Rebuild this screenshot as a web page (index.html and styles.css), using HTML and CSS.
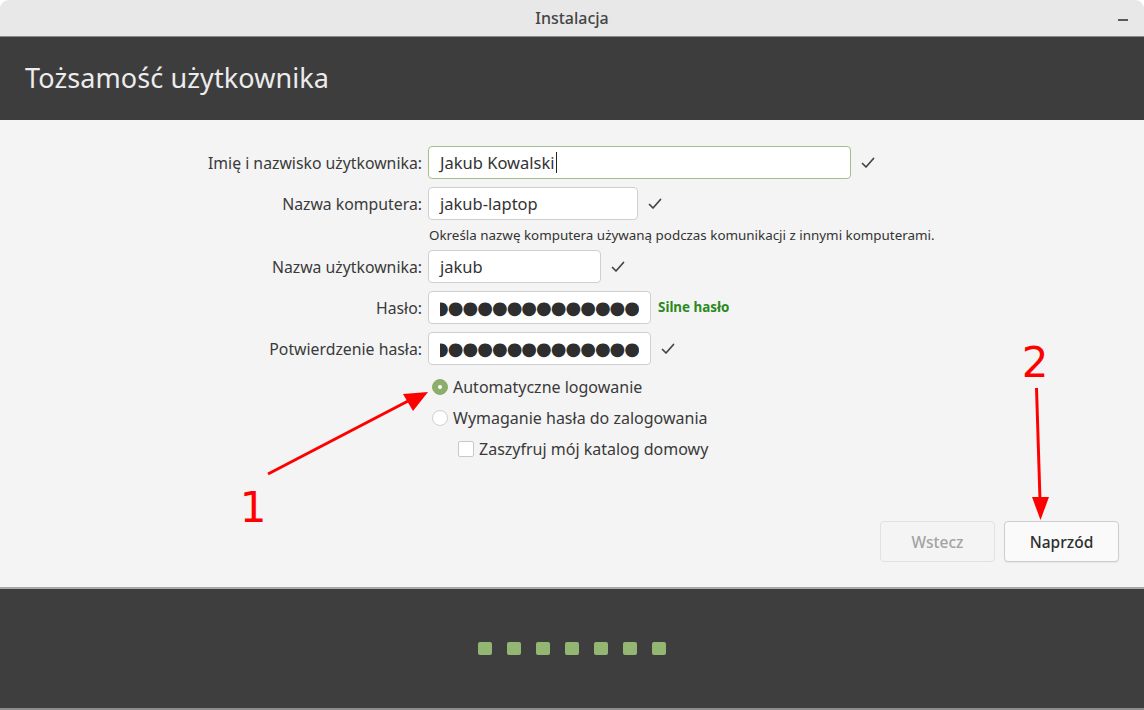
FILE: index.html
```html
<!DOCTYPE html>
<html lang="pl">
<head>
<meta charset="utf-8">
<title>Instalacja</title>
<link rel="stylesheet" href="styles.css">
</head>
<body>
<div class="window">
  <div class="titlebar">
    <span class="title">Instalacja</span>
    <span class="minimize"></span>
  </div>
  <div class="header">
    <h1>Tożsamość użytkownika</h1>
  </div>
  <div class="content">
    <div class="form">
      <label class="label">Imię i nazwisko użytkownika:</label>
      <div class="field">
        <div class="input input-focus w-name">Jakub Kowalski<span class="caret"></span></div>
        <svg class="check" viewBox="0 0 14 12"><path d="M1.5 6.5 L5 10 L12.5 1.5" /></svg>
      </div>

      <label class="label">Nazwa komputera:</label>
      <div class="field">
        <div class="input w-host">jakub-laptop</div>
        <svg class="check" viewBox="0 0 14 12"><path d="M1.5 6.5 L5 10 L12.5 1.5" /></svg>
      </div>

      <span></span>
      <div class="hint">Określa nazwę komputera używaną podczas komunikacji z innymi komputerami.</div>

      <label class="label">Nazwa użytkownika:</label>
      <div class="field">
        <div class="input w-user">jakub</div>
        <svg class="check" viewBox="0 0 14 12"><path d="M1.5 6.5 L5 10 L12.5 1.5" /></svg>
      </div>

      <label class="label">Hasło:</label>
      <div class="field">
        <div class="input w-pass password"><div class="dots-clip"><span>●●●●●●●●●●●●●●●</span></div></div>
        <span class="strength">Silne hasło</span>
      </div>

      <label class="label">Potwierdzenie hasła:</label>
      <div class="field">
        <div class="input w-pass password"><div class="dots-clip"><span>●●●●●●●●●●●●●●●</span></div></div>
        <svg class="check" viewBox="0 0 14 12"><path d="M1.5 6.5 L5 10 L12.5 1.5" /></svg>
      </div>
    </div>

    <div class="options">
      <div class="option"><span class="radio radio-on"></span><span>Automatyczne logowanie</span></div>
      <div class="option"><span class="radio"></span><span>Wymaganie hasła do zalogowania</span></div>
      <div class="option sub"><span class="checkbox"></span><span>Zaszyfruj mój katalog domowy</span></div>
    </div>

    <div class="buttons">
      <button class="btn btn-disabled">Wstecz</button>
      <button class="btn btn-primary">Naprzód</button>
    </div>
  </div>
  <div class="footer">
    <div class="dots">
      <span class="dot"></span><span class="dot"></span><span class="dot"></span><span class="dot"></span><span class="dot"></span><span class="dot"></span><span class="dot"></span>
    </div>
  </div>

  <svg class="annotations" viewBox="0 0 1144 710" width="1144" height="710">
    <line x1="268" y1="474" x2="410" y2="400" class="arrow-line"/>
    <polygon points="428,392 403,394 413,411" class="arrow-head"/>
    <text x="253" y="522" class="num">1</text>
    <line x1="1036.5" y1="388" x2="1040" y2="500" class="arrow-line"/>
    <polygon points="1040.5,520 1032,497 1049,497" class="arrow-head"/>
    <text x="1035" y="377" class="num">2</text>
  </svg>
</div>
</body>
</html>
```

FILE: styles.css
```css
* { box-sizing: border-box; }

html, body {
  margin: 0;
  padding: 0;
  background: #ffffff;
}

body {
  width: 1144px;
  height: 710px;
  overflow: hidden;
  font-family: "Noto Sans", "Open Sans", sans-serif;
  color: #333333;
}

.window {
  position: relative;
  width: 1144px;
  height: 710px;
  display: flex;
  flex-direction: column;
  background: #f4f4f4;
  border-radius: 9px 9px 0 0;
  overflow: hidden;
}

.titlebar {
  height: 37px;
  flex: none;
  background: #e8e8e8;
  border-bottom: 1px solid #8a8a8a;
  display: flex;
  align-items: center;
  justify-content: center;
  position: relative;
}

.title {
  font-size: 16px;
  font-weight: 500;
  color: #454545;
}

.minimize {
  position: absolute;
  right: 16px;
  top: 19px;
  width: 10px;
  height: 2px;
  background: #5a5a5a;
}

.header {
  height: 83px;
  flex: none;
  background: #3d3d3d;
  display: flex;
  align-items: center;
  padding-left: 25px;
}

.header h1 {
  margin: 0;
  font-size: 27px;
  font-weight: 400;
  color: #ececec;
  letter-spacing: 0.1px;
  padding-bottom: 2px;
}

.content {
  flex: 1;
  display: flex;
  flex-direction: column;
  padding: 26px 25px 25px 0;
  background: #f4f4f4;
}

.form {
  display: grid;
  grid-template-columns: 422px auto;
  column-gap: 6px;
  row-gap: 8px;
  align-items: center;
}

.label {
  text-align: right;
  font-size: 15.8px;
  color: #3a3a3a;
}

.field {
  display: flex;
  align-items: center;
}

.input {
  height: 33px;
  background: #ffffff;
  border: 1px solid #cfcfcf;
  border-radius: 4px;
  padding: 0 10px 0 11px;
  display: flex;
  align-items: center;
  font-size: 16.5px;
  color: #333333;
  overflow: hidden;
  white-space: nowrap;
}

.input-focus {
  border-color: #a3c08a;
}

.caret {
  display: inline-block;
  width: 1px;
  height: 21px;
  background: #222222;
  margin-left: 1px;
}

.w-name { width: 423px; }
.w-host { width: 210px; }
.w-user { width: 173px; }
.w-pass { width: 223px; }

.password {
  padding: 0 11px 0 11px;
}

.dots-clip {
  width: 199px;
  overflow: hidden;
  display: flex;
  justify-content: flex-end;
}

.dots-clip span {
  font-family: "DejaVu Sans", sans-serif;
  font-size: 18px;
  letter-spacing: -1px;
  color: #2e2e2e;
  line-height: 1;
  white-space: nowrap;
  flex: none;
}

.check {
  width: 14px;
  height: 12px;
  margin-left: 10px;
  fill: none;
  stroke: #444444;
  stroke-width: 1.7;
  stroke-linecap: round;
  stroke-linejoin: round;
}

.hint {
  font-size: 13.4px;
  line-height: 14px;
  height: 14px;
  color: #333333;
  padding-left: 1px;
}

.strength {
  margin-left: 7px;
  font-size: 13.4px;
  font-weight: 700;
  color: #2a8a1f;
  margin-top: -2px;
}

.options {
  margin-top: 10px;
  padding-left: 432px;
  display: flex;
  flex-direction: column;
  gap: 7px;
}

.option {
  display: flex;
  align-items: center;
  height: 24px;
  font-size: 16px;
  color: #3a3a3a;
  gap: 5px;
}

.option.sub {
  padding-left: 26px;
}

.radio {
  width: 16px;
  height: 16px;
  border-radius: 50%;
  background: #ffffff;
  border: 1px solid #cfcfcf;
  position: relative;
  flex: none;
}

.radio-on {
  background: #8cae6c;
  border-color: #8cae6c;
}

.radio-on::after {
  content: "";
  position: absolute;
  left: 5px;
  top: 5px;
  width: 4px;
  height: 4px;
  border-radius: 50%;
  background: #ffffff;
}

.checkbox {
  width: 16px;
  height: 16px;
  border-radius: 2px;
  background: #ffffff;
  border: 1px solid #c8c8c8;
  flex: none;
}

.buttons {
  margin-top: auto;
  display: flex;
  justify-content: flex-end;
  gap: 9px;
}

.btn {
  width: 115px;
  height: 41px;
  border-radius: 4px;
  font-family: "Noto Sans", "Open Sans", sans-serif;
  font-size: 15.5px;
  font-weight: 500;
}

.btn-disabled {
  background: #f4f4f4;
  border: 1px solid #e1e1e1;
  color: #a3a3a3;
}

.btn-primary {
  background: #fafafa;
  border: 1px solid #cdcdcd;
  color: #2e2e2e;
  box-shadow: 0 1px 1px rgba(0,0,0,0.06);
}

.footer {
  height: 123px;
  flex: none;
  background: #3e3e3e;
  border-top: 2px solid #a8a8a8;
  border-bottom: 2px solid #8d8d8d;
  display: flex;
  align-items: center;
  justify-content: center;
}

.dots {
  display: flex;
  gap: 15px;
}

.dot {
  width: 14px;
  height: 13px;
  border-radius: 2px;
  background: #94b673;
}

.annotations {
  position: absolute;
  left: 0;
  top: 0;
  pointer-events: none;
}

.arrow-line {
  stroke: #ff0000;
  stroke-width: 3;
}

.arrow-head {
  fill: #ff0000;
}

.num {
  font-family: "DejaVu Sans", sans-serif;
  font-size: 42px;
  fill: #ff0000;
  text-anchor: middle;
}
```
